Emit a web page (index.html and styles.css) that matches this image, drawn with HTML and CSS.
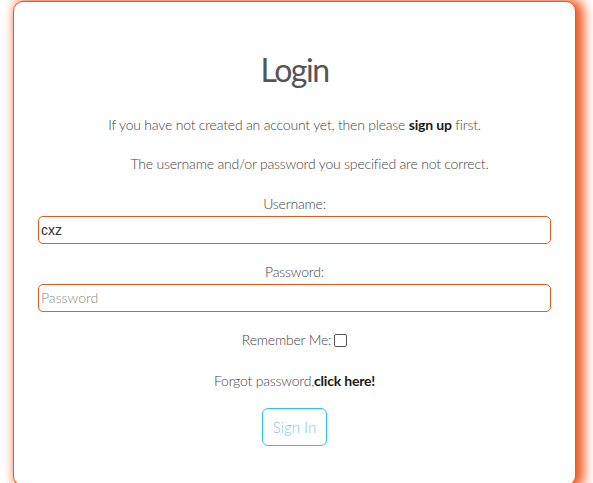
FILE: index.html
```html
<!DOCTYPE html>
<html>
<head>
<meta charset="utf-8">
<link rel="stylesheet" href="styles.css">
</head>
<body>
<div class="card">
  <h1 class="title">Login</h1>
  <p class="line first">If you have not created an account yet, then please <a class="strong" href="#">sign up</a> first.</p>
  <p class="line second">The username and/or password you specified are not correct.</p>
  <label class="label lbl-user" for="u">Username:</label>
  <input class="field" id="u" type="text" value="cxz">
  <label class="label lbl-pass" for="p">Password:</label>
  <input class="field" id="p" type="password" placeholder="Password">
  <div class="line remember">Remember Me: <span class="box"></span></div>
  <p class="line forgot">Forgot password,<a class="strong" href="#">click here!</a></p>
  <button class="btn">Sign In</button>
</div>
</body>
</html>
```
FILE: styles.css
```css
html, body {
  margin: 0;
  padding: 0;
  background: #fff;
  overflow: hidden;
}
body {
  font-family: Lato, "Open Sans", sans-serif;
  font-weight: 300;
  color: #444;
}
.card {
  box-sizing: border-box;
  margin: 1px 0 0 13px;
  width: 563px;
  height: 485px;
  border: 1px solid #f0561d;
  border-radius: 10px;
  background: #fff;
  box-shadow: 5px 1px 12px 3px #f0561d;
  padding: 0 24px;
  display: flex;
  flex-direction: column;
  align-items: center;
}
.title {
  margin: 48px 0 0;
  font-size: 32px;
  line-height: 40px;
  font-weight: 400;
  letter-spacing: -1.5px;
  color: #555;
}
.line {
  margin: 0;
  font-size: 14px;
  line-height: 20px;
  letter-spacing: -0.2px;
  color: #444;
}
.first { margin-top: 25px; }
.second {
  margin-top: 19px;
  padding-left: 30px;
}
.strong {
  color: #1a1a1a;
  font-weight: 700;
  text-decoration: none;
}
.label {
  font-size: 14px;
  line-height: 20px;
  letter-spacing: -0.2px;
  color: #444;
}
.lbl-user { margin-top: 20px; }
.lbl-pass { margin-top: 18px; }
.field {
  box-sizing: border-box;
  margin-top: 2px;
  width: 100%;
  height: 28px;
  border: 1px solid #f0561d;
  border-radius: 5px;
  padding: 0 2px;
  font-family: "Liberation Sans", Arial, sans-serif;
  font-size: 14px;
  color: #333;
  outline: none;
  background: #fff;
}
.field::placeholder {
  font-family: Lato, sans-serif;
  font-weight: 300;
  color: #888;
}
.remember {
  margin-top: 18px;
  display: flex;
  align-items: center;
}
.box {
  display: inline-block;
  width: 11px;
  height: 11px;
  border: 1px solid #555;
  border-radius: 2px;
  margin-left: 3px;
}
.forgot { margin-top: 21px; }
.btn {
  margin-top: 17px;
  width: 65px;
  height: 38px;
  border: 1px solid #1ec8ee;
  border-radius: 6px;
  background: #fff;
  color: #7cc8ec;
  font-family: Lato, sans-serif;
  font-weight: 300;
  font-size: 15px;
  padding: 0;
}
```
